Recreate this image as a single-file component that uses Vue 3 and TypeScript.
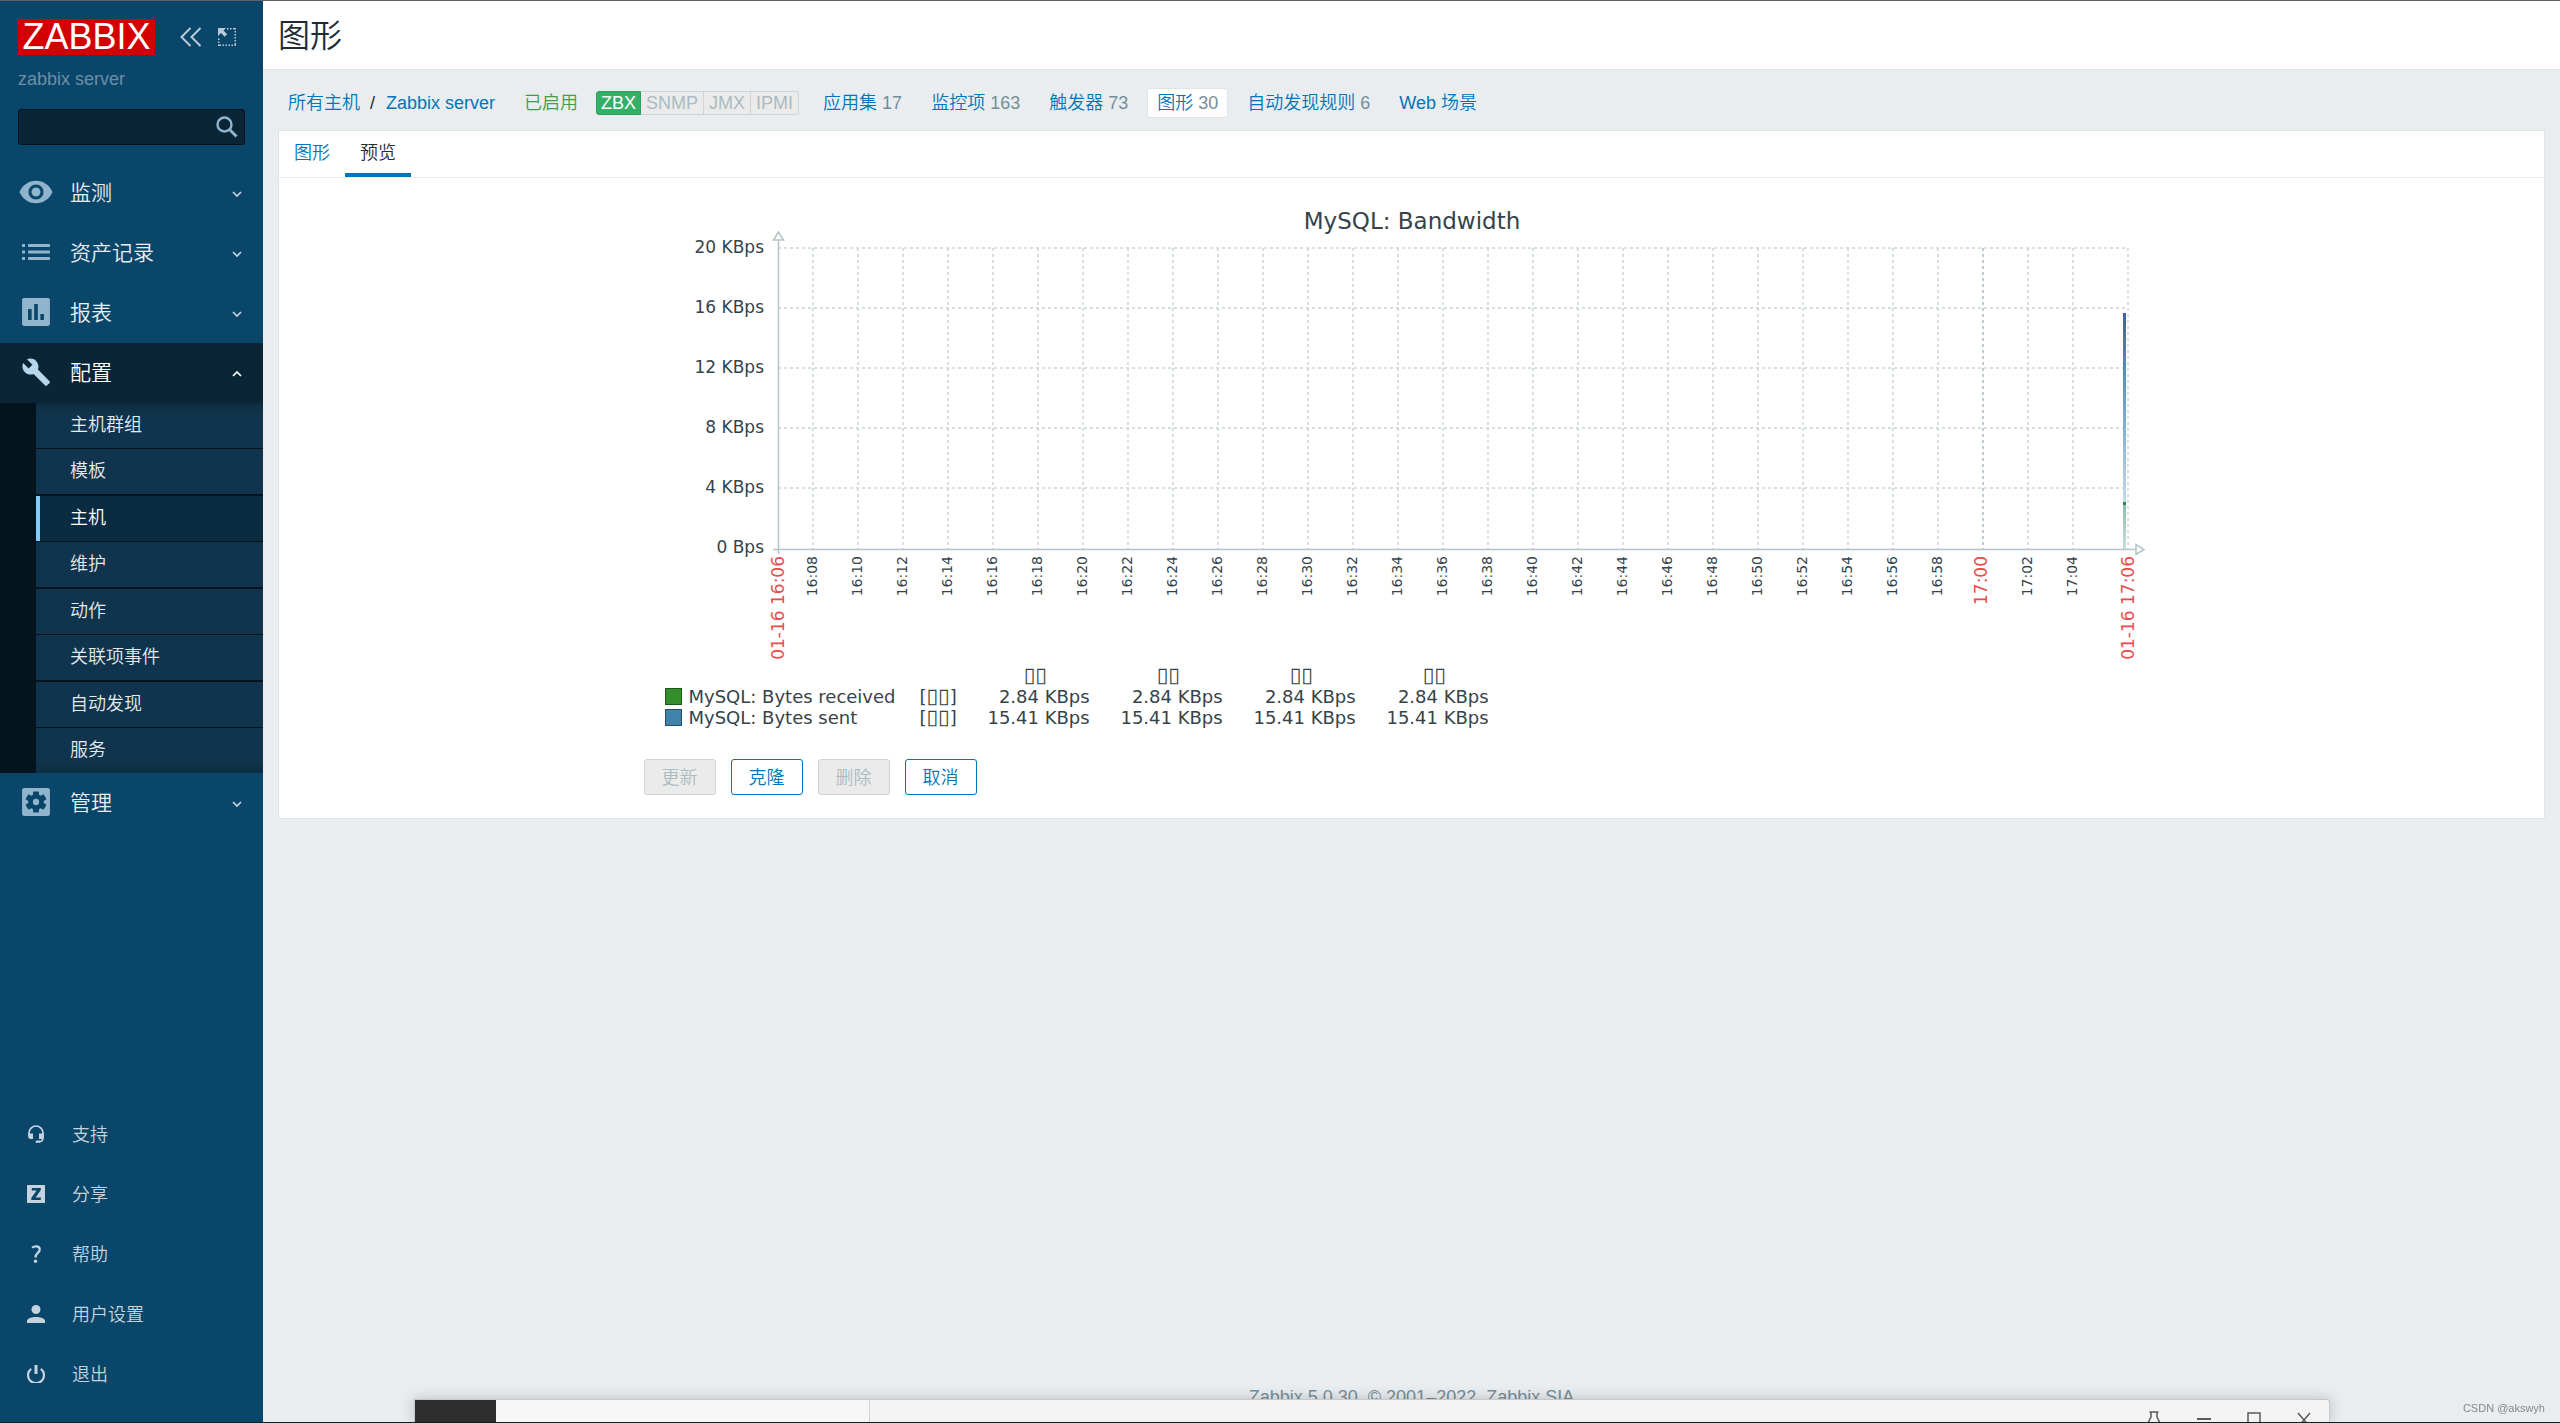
<script setup lang="ts">
interface MenuItem {
  id: string
  label: string
  open?: boolean
  children?: { label: string; active?: boolean }[]
}

const menu: MenuItem[] = [
  { id: 'monitoring', label: '监测' },
  { id: 'inventory', label: '资产记录' },
  { id: 'reports', label: '报表' },
  {
    id: 'configuration',
    label: '配置',
    open: true,
    children: [
      { label: '主机群组' },
      { label: '模板' },
      { label: '主机', active: true },
      { label: '维护' },
      { label: '动作' },
      { label: '关联项事件' },
      { label: '自动发现' },
      { label: '服务' },
    ],
  },
  { id: 'administration', label: '管理' },
]

const userMenu = [
  { id: 'support', label: '支持' },
  { id: 'share', label: '分享' },
  { id: 'help', label: '帮助' },
  { id: 'profile', label: '用户设置' },
  { id: 'signout', label: '退出' },
]

const hostTabs: { label: string; count?: number; selected?: boolean }[] = [
  { label: '应用集', count: 17 },
  { label: '监控项', count: 163 },
  { label: '触发器', count: 73 },
  { label: '图形', count: 30, selected: true },
  { label: '自动发现规则', count: 6 },
  { label: 'Web 场景' },
]

const interfaces = ['ZBX', 'SNMP', 'JMX', 'IPMI']

// Plot area inside the chart's own coordinate system
const plot = { left: 134, right: 1484, top: 48, bottom: 349 }

const yTicks = ['20 KBps', '16 KBps', '12 KBps', '8 KBps', '4 KBps', '0 Bps'].map((label, i) => ({
  label,
  y: plot.top + i * 60,
}))

const xTicks = Array.from({ length: 29 }, (_, i) => {
  const minutes = 16 * 60 + 8 + i * 2
  const hour = Math.floor(minutes / 60)
  const minute = minutes % 60
  return {
    label: `${hour}:${String(minute).padStart(2, '0')}`,
    x: 169 + i * 45,
    major: minute === 0,
  }
})

const missing = '▯▯'
const series = [
  { name: 'MySQL: Bytes received', color: '#348e2c', edge: '#1f561a', value: '2.84 KBps' },
  { name: 'MySQL: Bytes sent', color: '#3f82ac', edge: '#264e67', value: '15.41 KBps' },
]

const actions = [
  { label: '更新', disabled: true },
  { label: '克隆', disabled: false },
  { label: '删除', disabled: true },
  { label: '取消', disabled: false },
]
</script>

<template>
  <div class="page">
    <aside class="sidebar">
      <div class="brand">
        <a class="logo" href="#">ZABBIX</a>
        <button class="icon-btn collapse" type="button" aria-label="收起">
          <svg width="22" height="20" viewBox="0 0 22 20" fill="none" stroke="currentColor" stroke-width="2">
            <path d="M10.500 1 1.500 10l9 9M20.500 1l-9 9 9 9" />
          </svg>
        </button>
        <button class="icon-btn" type="button" aria-label="隐藏">
          <svg width="18" height="18" viewBox="0 0 18 18" fill="none" stroke="currentColor">
            <path d="M9 .750h9M17.250 0v18M18 17.250H0M.750 18V9" stroke-width="1.500" stroke-dasharray="1.500 1.500" />
            <path d="M0 0h8L5.500 2.500l3.700 3.700-2.500 2.500L3 5 0 8z" fill="currentColor" stroke="none" />
          </svg>
        </button>
      </div>
      <div class="server">zabbix server</div>
      <form class="search" role="search" @submit.prevent>
        <input type="text" aria-label="搜索" />
        <button type="submit" aria-label="搜索">
          <svg width="22" height="22" viewBox="0 0 22 22" fill="none" stroke="currentColor">
            <circle cx="8.500" cy="8.500" r="7" stroke-width="2.400" />
            <path d="m13.500 13.500 7 7" stroke-width="3" />
          </svg>
        </button>
      </form>

      <nav class="menu">
        <ul>
          <li v-for="item in menu" :key="item.id">
            <a href="#" class="menu-link" :class="{ open: item.open }">
              <svg class="menu-icon" width="36" height="36" viewBox="0 0 24 24" fill="currentColor">
                <path
                  v-if="item.id === 'monitoring'"
                  fill-rule="evenodd"
                  d="M12 4.500C7 4.500 2.730 7.610 1 12c1.730 4.390 6 7.500 11 7.500s9.270-3.110 11-7.500c-1.730-4.390-6-7.500-11-7.500zM12 17c-2.760 0-5-2.240-5-5s2.240-5 5-5 5 2.240 5 5-2.240 5-5 5zm0-8c-1.660 0-3 1.340-3 3s1.340 3 3 3 3-1.340 3-3-1.340-3-3-3z"
                />
                <path
                  v-else-if="item.id === 'inventory'"
                  d="M2.700 6.700h2v2h-2zM6.700 6.700h14.600v2H6.700zM2.700 11h2v2h-2zM6.700 11h14.600v2H6.700zM2.700 15.300h2v2h-2zM6.700 15.300h14.600v2H6.700z"
                />
                <path
                  v-else-if="item.id === 'reports'"
                  fill-rule="evenodd"
                  d="M4 2.700h16c.700 0 1.300.600 1.300 1.300v16c0 .700-.600 1.300-1.300 1.300H4c-.700 0-1.300-.600-1.300-1.300V4c0-.700.600-1.300 1.300-1.300zM6.700 10v7.300h2.400V10zM10.800 6.700v10.600h2.400V6.700zM14.900 13.300v4h2.400v-4z"
                />
                <path
                  v-else-if="item.id === 'configuration'"
                  d="m21 18.100-7.700-7.700c.800-1.900.300-4.200-1.200-5.800-1.700-1.700-4.100-2-6.100-1.100l3.600 3.600-2.500 2.500-3.700-3.600c-.900 2-.500 4.500 1.200 6.100 1.600 1.600 3.900 2 5.800 1.200l7.700 7.700c.300.300.900.300 1.200 0L21 19.300c.400-.300.400-.900 0-1.200z"
                />
                <g v-else>
                  <rect x="2.700" y="2.700" width="18.600" height="18.600" rx="1.500" />
                  <g fill="#0a466a">
                    <circle cx="12" cy="12" r="5.200" />
                    <rect v-for="angle in [0, 60, 120]" :key="angle" x="10" y="5" width="4" height="14" rx=".6" :transform="`rotate(${angle} 12 12)`" />
                  </g>
                  <circle cx="12" cy="12" r="2.100" />
                </g>
              </svg>
              <span class="menu-label">{{ item.label }}</span>
              <svg class="chevron" width="10" height="10" viewBox="0 0 10 10" fill="none" stroke="currentColor" stroke-width="1.700">
                <path :d="item.open ? 'M1 8l4-4 4 4' : 'M1 4l4 4 4-4'" />
              </svg>
            </a>
            <ul v-if="item.children" class="submenu">
              <li v-for="child in item.children" :key="child.label" :class="{ active: child.active }">
                <a href="#">{{ child.label }}</a>
              </li>
            </ul>
          </li>
        </ul>
      </nav>

      <nav class="user-menu">
        <ul>
          <li v-for="item in userMenu" :key="item.id">
            <a href="#">
              <svg width="18" height="18" viewBox="0 0 18 18" fill="currentColor">
                <g v-if="item.id === 'support'">
                  <path d="M2 11V8a7 7 0 0 1 14 0v5c0 2-1.500 3.500-4 4" fill="none" stroke="currentColor" stroke-width="1.700" />
                  <path d="M1.200 8.500H6V14H3.500C2 14 1.200 13 1.200 11.500zM12 8.500h4.800V12c0 1.300-1 2-2.300 2H12z" />
                  <path d="M9.500 15.500H13v2l-3.500.5c-1.200 0-1.200-2.500 0-2.500z" />
                </g>
                <path
                  v-else-if="item.id === 'share'"
                  fill-rule="evenodd"
                  d="M1 0h16c.6 0 1 .4 1 1v16c0 .6-.4 1-1 1H1c-.6 0-1-.4-1-1V1c0-.6.4-1 1-1zm3.800 3v2.500h4.800L4.300 13v2h9.500v-2.500H8.600L13.800 5V3z"
                />
                <g v-else-if="item.id === 'help'">
                  <path d="M5 2.600C7.500.7 12.700.6 12.700 4.500c0 3.500-4.200 3.500-4.200 8" fill="none" stroke="currentColor" stroke-width="2.300" />
                  <circle cx="8.500" cy="16.300" r="1.700" />
                </g>
                <g v-else-if="item.id === 'profile'">
                  <circle cx="9" cy="4.500" r="4.500" />
                  <path d="M0 18v-2c0-2.600 5-4 9-4s9 1.400 9 4v2z" />
                </g>
                <g v-else fill="none" stroke="currentColor">
                  <path d="M9 0v9" stroke-width="3" />
                  <path d="M4.200 3.800a8 8 0 1 0 9.600 0" stroke-width="2.200" />
                </g>
              </svg>
              <span>{{ item.label }}</span>
            </a>
          </li>
        </ul>
      </nav>
    </aside>

    <div class="content">
      <header class="title-bar">
        <h1>图形</h1>
      </header>

      <nav class="host-nav">
        <a href="#">所有主机</a>
        <span class="slash">/</span>
        <a href="#">Zabbix server</a>
        <span class="enabled">已启用</span>
        <span class="interfaces">
          <span v-for="name in interfaces" :key="name" :class="{ on: name === 'ZBX' }">{{ name }}</span>
        </span>
        <span v-for="tab in hostTabs" :key="tab.label" class="host-tab" :class="{ selected: tab.selected }">
          <a href="#">{{ tab.label }}</a><span v-if="tab.count" class="count">{{ tab.count }}</span>
        </span>
      </nav>

      <main class="card">
        <div class="tabs" role="tablist">
          <a href="#" role="tab" aria-selected="false">图形</a>
          <a href="#" role="tab" aria-selected="true" class="current">预览</a>
        </div>

        <div class="preview">
          <svg class="chart" viewBox="0 0 1536 465" role="img" aria-label="MySQL: Bandwidth">
            <defs>
              <linearGradient id="sent" x1="0" y1="0" x2="0" y2="1">
                <stop offset="0" stop-color="#1f6ea6" />
                <stop offset="0.25" stop-color="#4a8ab6" />
                <stop offset="1" stop-color="#c8dae8" />
              </linearGradient>
              <linearGradient id="received" x1="0" y1="0" x2="0" y2="1">
                <stop offset="0" stop-color="#8fbdb0" />
                <stop offset="1" stop-color="#c9ded8" />
              </linearGradient>
            </defs>
            <text class="chart-title" x="768" y="29" text-anchor="middle">MySQL: Bandwidth</text>

            <g class="grid">
              <line v-for="tick in yTicks.slice(0, 5)" :key="tick.y" :x1="plot.left" :x2="plot.right" :y1="tick.y" :y2="tick.y" />
              <line v-for="tick in xTicks" :key="tick.x" :class="{ major: tick.major }" :x1="tick.x" :x2="tick.x" :y1="plot.top" :y2="plot.bottom" />
              <line :x1="plot.right" :x2="plot.right" :y1="plot.top" :y2="plot.bottom" />
            </g>

            <rect x="1479" y="113" width="3" height="190" fill="url(#sent)" />
            <rect x="1479" y="305" width="3" height="44" fill="url(#received)" />
            <rect x="1479" y="302" width="3" height="3" fill="#2f8a4e" />

            <g class="axis">
              <path d="M134.500 40v314M129 349.500h1363" />
              <path d="M129.500 40h10l-5-8zM1492 344.500v10l8-5z" fill="#fff" />
            </g>

            <g class="y-label">
              <text v-for="tick in yTicks" :key="tick.label" x="120" :y="tick.y + 5" text-anchor="end">{{ tick.label }}</text>
            </g>
            <g>
              <text
                v-for="tick in xTicks"
                :key="tick.label"
                :class="tick.major ? 'x-major' : 'x-label'"
                :transform="`translate(${tick.x + 4} 356) rotate(-90)`"
                text-anchor="end"
              >{{ tick.label }}</text>
              <text class="x-major" transform="translate(140 356) rotate(-90)" text-anchor="end">01-16 16:06</text>
              <text class="x-major" transform="translate(1490 356) rotate(-90)" text-anchor="end">01-16 17:06</text>
            </g>
          </svg>

          <table class="legend">
            <thead>
              <tr>
                <th class="name"></th>
                <th class="func"></th>
                <th v-for="n in 4" :key="n" class="value"><span class="tofu">{{ missing }}</span></th>
              </tr>
            </thead>
            <tbody>
              <tr v-for="row in series" :key="row.name">
                <td class="name">
                  <span class="name-cell">
                    <span class="swatch" :style="{ background: row.color, borderColor: row.edge }"></span>{{ row.name }}
                  </span>
                </td>
                <td class="func">[<span class="tofu">{{ missing }}</span>]</td>
                <td v-for="n in 4" :key="n" class="value">{{ row.value }}</td>
              </tr>
            </tbody>
          </table>

          <div class="actions">
            <button v-for="action in actions" :key="action.label" type="button" :disabled="action.disabled">{{ action.label }}</button>
          </div>
        </div>
      </main>

      <footer class="footer">Zabbix 5.0.30, © 2001–2022, <a href="#">Zabbix SIA</a></footer>
    </div>

    <div class="window">
      <div class="window-rail"></div>
      <div class="window-list"></div>
      <div class="window-main">
        <button type="button" aria-label="置顶">
          <svg width="14" height="16" viewBox="0 0 14 16" fill="none" stroke="currentColor" stroke-width="1.500">
            <path d="M2.500 1h9M4 1v5l-3 6h12l-3-6V1" />
          </svg>
        </button>
        <button type="button" aria-label="最小化">
          <svg width="14" height="16" viewBox="0 0 14 16" fill="none" stroke="currentColor" stroke-width="2"><path d="M0 8h14" /></svg>
        </button>
        <button type="button" aria-label="最大化">
          <svg width="14" height="16" viewBox="0 0 14 16" fill="none" stroke="currentColor" stroke-width="1.500"><path d="M1 2h12v13H1z" /></svg>
        </button>
        <button type="button" aria-label="关闭">
          <svg width="14" height="16" viewBox="0 0 14 16" fill="none" stroke="currentColor" stroke-width="1.500"><path d="m1 2 12 14M13 2 1 16" /></svg>
        </button>
      </div>
    </div>
    <div class="watermark">CSDN @akswyh</div>
  </div>
</template>

<style>
body {
  margin: 0;
  background: #e9edf0;
}
</style>

<style scoped>
.page {
  box-sizing: border-box;
  display: flex;
  min-height: 100vh;
  border-top: 1px solid #5f6068;
  border-bottom: 1px solid #1b1b1d;
  background: #e9edf0;
  color: #1f2c33;
  font: 350 18px/24px 'Liberation Sans', 'Noto Sans CJK SC', sans-serif;
}

a {
  color: #0275b8;
  text-decoration: none;
}

ul {
  margin: 0;
  padding: 0;
  list-style: none;
}

button {
  font: inherit;
}

/* Sidebar */
.sidebar {
  box-sizing: border-box;
  display: flex;
  flex: none;
  flex-direction: column;
  width: 263px;
  padding: 18px 0;
  background: #0a466a;
}

.brand {
  display: flex;
  align-items: center;
  height: 36px;
  padding: 0 18px;
}

.logo {
  width: 137px;
  background: #d40000;
  color: #fff;
  font-size: 36px;
  line-height: 36px;
  text-align: center;
}

.icon-btn {
  display: flex;
  padding: 0;
  border: 0;
  background: none;
  color: #b8cbd6;
}

.collapse {
  margin: 0 16px 0 25px;
}

.server {
  margin: 12px 18px 18px;
  color: #6c8fa6;
}

.search {
  box-sizing: border-box;
  display: flex;
  align-items: center;
  height: 36px;
  margin: 0 18px 18px;
  padding-right: 6px;
  border: 1px solid #04121b;
  border-radius: 3px;
  background: #0a2636;
}

.search input {
  flex: 1;
  min-width: 0;
  padding: 0 9px;
  border: 0;
  background: none;
  color: #fff;
  font: inherit;
}

.search button {
  display: flex;
  padding: 0;
  border: 0;
  background: none;
  color: #8fb4cc;
}

.menu-link {
  display: flex;
  align-items: center;
  height: 60px;
  padding: 0 21px 0 18px;
  box-sizing: border-box;
  color: #e9edf0;
  font-size: 21px;
}

.menu-icon {
  margin: 0 16px 3px 0;
  color: #8fb4cc;
}

.menu-label {
  flex: 1;
}

.chevron {
  color: #c4d3dd;
}

.menu-link.open {
  background: #0a2636;
  color: #fff;
}

.open .menu-icon {
  color: #b6d6ec;
}

.open .chevron {
  color: #fff;
}

.submenu {
  border-left: 36px solid #04141e;
  background: #04141e;
}

.submenu li {
  margin-bottom: 1px;
  background: #10344d;
}

.submenu li:nth-child(even) {
  margin-bottom: 2px;
}

.submenu li:first-child {
  background: linear-gradient(#0d2c40, #10344d 12px);
}

.submenu li:last-child {
  margin-bottom: 0;
  background: linear-gradient(#10344d 33px, #0d2c40);
}

.submenu a {
  display: block;
  padding-left: 34px;
  color: #e4eaee;
  line-height: 45px;
}

.submenu .active {
  background: #0b2c40;
  box-shadow: inset 4px 0 #80ccff;
}

.submenu .active a {
  color: #fff;
}

.user-menu {
  margin-top: auto;
}

.user-menu a {
  display: flex;
  align-items: center;
  gap: 27px;
  height: 60px;
  padding-left: 27px;
  color: #c4d3dd;
}

.user-menu span {
  padding-top: 2px;
}

/* Content */
.content {
  display: flex;
  flex: 1;
  flex-direction: column;
  min-width: 0;
}

.title-bar {
  padding: 2px 15px 0;
  border-bottom: 1px solid #dfe4e7;
  background: #fff;
}

h1 {
  margin: 0;
  font-size: 32px;
  font-weight: 350;
  line-height: 66px;
}

.host-nav {
  display: flex;
  align-items: center;
  height: 60px;
  padding: 6px 25px 0;
  box-sizing: border-box;
}

.slash {
  margin: 0 11px 0 10px;
}

.enabled {
  margin: 0 18px 0 29px;
  color: #429e47;
}

.interfaces {
  display: flex;
  margin-right: 14px;
  line-height: 22px;
}

.interfaces span {
  padding: 0 5px;
  border: 1px solid #ccd5d9;
  border-left-width: 0;
  background: #ebebeb;
  color: #acbbc2;
}

.interfaces span:last-child {
  border-radius: 0 3px 3px 0;
}

.interfaces .on {
  padding: 0 4px;
  border: 1px solid #2f9f5e;
  border-radius: 3px 0 0 3px;
  background: #34af67;
  color: #fff;
}

.host-tab {
  padding: 2px 9px;
  border: 1px solid transparent;
  border-radius: 3px;
  margin-right: 9px;
}

.host-tab.selected {
  border-color: #dfe4e7;
  background: #fff;
}

.count {
  margin-left: 5px;
  color: #768d99;
}

.card {
  margin: 0 15px;
  border: 1px solid #dfe4e7;
  background: #fff;
}

.tabs {
  display: flex;
  border-bottom: 1px solid #ebeef0;
}

.tabs a {
  padding: 2px 15px 0;
  border-bottom: 4px solid transparent;
  line-height: 40px;
}

.tabs .current {
  border-color: #0275b8;
  color: #1f2c33;
}

.preview {
  max-width: 1536px;
  margin: 0 auto;
  padding: 22px 0 23px;
}

.chart {
  display: block;
  width: 100%;
}

.chart text,
.legend {
  font-family: 'DejaVu Sans', sans-serif;
  font-weight: 400;
}

.chart text {
  fill: #36434a;
}

.chart .chart-title {
  font-size: 23px;
}

.grid line {
  stroke: #ccd5d9;
  stroke-dasharray: 3 3;
  stroke-width: 1.5;
}

.grid .major {
  stroke: #acbbc2;
}

.axis path {
  fill: none;
  stroke: #b4c4cb;
  stroke-width: 1.5;
}

.y-label text {
  font-size: 17px;
}

.chart .x-label {
  font-size: 14px;
}

.chart .x-major {
  fill: #e84d4d;
  font-size: 17px;
}

.legend {
  margin-left: 21px;
  border-collapse: collapse;
  color: #36434a;
  font-size: 18px;
  line-height: 21px;
}

.legend th,
.legend td {
  height: 21px;
  padding: 0;
  font-weight: 400;
  white-space: nowrap;
}

.legend .name {
  width: 255px;
  text-align: left;
}

.legend .func {
  width: 34px;
}

.legend .value {
  width: 109px;
  padding-left: 24px;
  text-align: right;
}

.legend th.value {
  text-align: center;
}

.name-cell {
  display: flex;
  align-items: center;
  gap: 7px;
}

.swatch {
  box-sizing: border-box;
  width: 17px;
  height: 17px;
  border: 1px solid;
}

.tofu {
  font-size: 21px;
  line-height: 1px;
}

.actions {
  display: flex;
  gap: 15px;
  margin-top: 31px;
}

.actions button {
  width: 72px;
  height: 36px;
  padding: 2px 0 0;
  border: 1px solid #0275b8;
  border-radius: 3px;
  background: #fff;
  color: #0275b8;
}

.actions button:disabled {
  border-color: #ccd5d9;
  background: #ebebeb;
  color: #acbbc2;
}

.footer {
  margin-top: auto;
  padding-bottom: 13px;
  color: #768d99;
  text-align: center;
}

.footer a {
  color: inherit;
}

/* Window overlapping the bottom edge of the page */
.window {
  position: fixed;
  right: 230px;
  bottom: 1px;
  left: 414px;
  display: flex;
  height: 22px;
  overflow: visible;
  border: 1px solid #c6c8ca;
  border-bottom: 0;
  border-radius: 0 3px 0 0;
  background: #f4f4f4;
  box-shadow: 0 0 14px rgba(0, 0, 0, 0.2);
  clip-path: inset(-20px -20px 0);
}

.window-rail {
  width: 81px;
  background: #2e2e2e;
}

.window-list {
  width: 373px;
  border-right: 1px solid #d2d2d2;
  background: #f7f7f7;
}

.window-main {
  display: flex;
  flex: 1;
  align-items: flex-start;
  justify-content: flex-end;
  gap: 36px;
  padding: 11px 18px 0 0;
}

.window-main button {
  display: flex;
  padding: 0;
  border: 0;
  background: none;
  color: #5a5a5a;
}

.watermark {
  position: fixed;
  right: 15px;
  bottom: 8px;
  color: #85898c;
  font-size: 11px;
  line-height: 14px;
}
</style>
